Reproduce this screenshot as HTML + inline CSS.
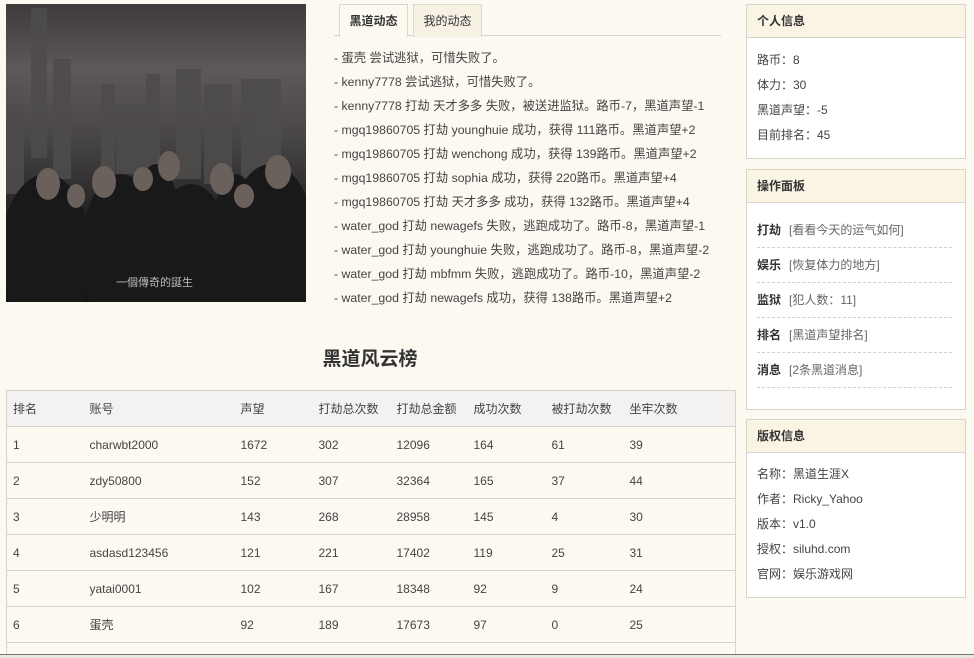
<!DOCTYPE html>
<html><head><meta charset="utf-8"><style>
*{margin:0;padding:0;box-sizing:border-box}
html,body{width:974px;height:658px;overflow:hidden}
body{background:#fcf9f1;font-family:"Liberation Sans","Noto Sans CJK SC",sans-serif;font-size:12px;color:#444;position:relative}
.abs{position:absolute}
.img{left:6px;top:4px;width:300px;height:298px;background:linear-gradient(180deg,#3e3b3b 0%,#5e5959 22%,#484545 45%,#242323 70%,#141414 100%);overflow:hidden}
.tabs{left:334px;top:4px;width:387px;height:32px;border-bottom:1px solid #d8d4cc}
.tab{position:absolute;top:0;height:33px;border:1px solid #ddd8cc;border-bottom:none;line-height:32px;text-align:center;font-size:12px;background:#f7f1e4;color:#333}
.feed{left:334px;top:46px;line-height:24px;font-size:12.3px;color:#444}
h2{position:absolute;left:0;width:740px;top:344px;text-align:center;font-size:19px;color:#333;font-weight:bold}
table{position:absolute;left:6px;top:390px;width:730px;border-collapse:collapse;border:1px solid #d6d3cc}
td{height:36px;border-bottom:1px solid #d6d3cc;padding-left:6px;font-size:12px;color:#444}
tr.h td{background:#f3f2f0;color:#444}
.panel{position:absolute;left:746px;width:220px;border:1px solid #d8d4c8;background:#fff}
.ph{height:33px;background:#faf4e4;border-bottom:1px solid #d8d4c8;line-height:32px;padding-left:10px;font-weight:bold;font-size:12px;color:#333}
.pb{padding:8px 10px;line-height:25px;font-size:12px;color:#444}
.op{height:35px;line-height:35px;border-bottom:1px dashed #d0d0d0;width:195px}
.op b{color:#333;margin-right:8px}
.op span{color:#666}
</style></head><body>
<div class="abs img">
<svg width="300" height="298" viewBox="0 0 300 298">
<g fill="#4e4b4b" opacity=".9">
<rect x="25" y="4" width="16" height="150"/><rect x="47" y="55" width="18" height="120"/><rect x="95" y="80" width="14" height="90"/><rect x="110" y="100" width="30" height="70"/><rect x="140" y="70" width="14" height="100"/><rect x="170" y="65" width="25" height="110"/><rect x="198" y="80" width="28" height="100"/><rect x="235" y="75" width="40" height="100"/><rect x="0" y="100" width="18" height="90"/>
</g>
<g fill="#1a1919">
<ellipse cx="40" cy="250" rx="45" ry="80"/><ellipse cx="115" cy="250" rx="40" ry="80"/><ellipse cx="185" cy="255" rx="40" ry="75"/><ellipse cx="265" cy="245" rx="45" ry="85"/><ellipse cx="150" cy="230" rx="25" ry="70"/><ellipse cx="230" cy="240" rx="25" ry="70"/>
</g>
<g fill="#6a605c"><ellipse cx="42" cy="180" rx="12" ry="16"/><ellipse cx="98" cy="178" rx="12" ry="16"/><ellipse cx="137" cy="175" rx="10" ry="12"/><ellipse cx="163" cy="162" rx="11" ry="15"/><ellipse cx="216" cy="175" rx="12" ry="16"/><ellipse cx="238" cy="192" rx="10" ry="12"/><ellipse cx="272" cy="168" rx="13" ry="17"/><ellipse cx="70" cy="192" rx="9" ry="12"/></g>
<text x="110" y="282" fill="#bbb" font-size="11" font-family="Noto Sans CJK TC">一個傳奇的誕生</text>
</svg></div>
<div class="abs tabs">
<div class="tab" style="left:5px;width:69px;background:#fcf9f1;height:33px;font-weight:bold">黑道动态</div>
<div class="tab" style="left:79px;width:69px">我的动态</div>
</div>
<div class="abs feed">
- 蛋壳 尝试逃狱，可惜失败了。<br>
- kenny7778 尝试逃狱，可惜失败了。<br>
- kenny7778 打劫 天才多多 失败，被送进监狱。路币-7，黑道声望-1<br>
- mgq19860705 打劫 younghuie 成功，获得 111路币。黑道声望+2<br>
- mgq19860705 打劫 wenchong 成功，获得 139路币。黑道声望+2<br>
- mgq19860705 打劫 sophia 成功，获得 220路币。黑道声望+4<br>
- mgq19860705 打劫 天才多多 成功，获得 132路币。黑道声望+4<br>
- water_god 打劫 newagefs 失败，逃跑成功了。路币-8，黑道声望-1<br>
- water_god 打劫 younghuie 失败，逃跑成功了。路币-8，黑道声望-2<br>
- water_god 打劫 mbfmm 失败，逃跑成功了。路币-10，黑道声望-2<br>
- water_god 打劫 newagefs 成功，获得 138路币。黑道声望+2
</div>
<h2>黑道风云榜</h2>
<table>
<colgroup><col style="width:77px"><col style="width:151px"><col style="width:78px"><col style="width:78px"><col style="width:77px"><col style="width:78px"><col style="width:78px"><col></colgroup>
<tr class="h"><td>排名</td><td>账号</td><td>声望</td><td>打劫总次数</td><td>打劫总金额</td><td>成功次数</td><td>被打劫次数</td><td>坐牢次数</td></tr>
<tr><td>1</td><td>charwbt2000</td><td>1672</td><td>302</td><td>12096</td><td>164</td><td>61</td><td>39</td></tr>
<tr><td>2</td><td>zdy50800</td><td>152</td><td>307</td><td>32364</td><td>165</td><td>37</td><td>44</td></tr>
<tr><td>3</td><td>少明明</td><td>143</td><td>268</td><td>28958</td><td>145</td><td>4</td><td>30</td></tr>
<tr><td>4</td><td>asdasd123456</td><td>121</td><td>221</td><td>17402</td><td>119</td><td>25</td><td>31</td></tr>
<tr><td>5</td><td>yatai0001</td><td>102</td><td>167</td><td>18348</td><td>92</td><td>9</td><td>24</td></tr>
<tr><td>6</td><td>蛋壳</td><td>92</td><td>189</td><td>17673</td><td>97</td><td>0</td><td>25</td></tr>
<tr><td>&nbsp;</td><td></td><td></td><td></td><td></td><td></td><td></td><td></td></tr>
</table>
<div class="panel" style="top:4px;height:155px"><div class="ph">个人信息</div>
<div class="pb" style="padding-top:10px">路币：8<br>体力：30<br>黑道声望：-5<br>目前排名：45</div></div>
<div class="panel" style="top:169px;height:241px"><div class="ph">操作面板</div>
<div class="pb" style="padding-top:10px">
<div class="op"><b>打劫</b><span>[看看今天的运气如何]</span></div>
<div class="op"><b>娱乐</b><span>[恢复体力的地方]</span></div>
<div class="op"><b>监狱</b><span>[犯人数：11]</span></div>
<div class="op"><b>排名</b><span>[黑道声望排名]</span></div>
<div class="op"><b>消息</b><span>[2条黑道消息]</span></div>
</div></div>
<div class="panel" style="top:419px;height:179px"><div class="ph">版权信息</div>
<div class="pb" style="padding-top:9px">名称：黑道生涯X<br>作者：Ricky_Yahoo<br>版本：v1.0<br>授权：siluhd.com<br>官网：娱乐游戏网</div></div>
<div class="abs" style="left:0;top:654px;width:974px;height:4px;background:#e8e6e0;border-top:1px solid #777"></div>
</body></html>
